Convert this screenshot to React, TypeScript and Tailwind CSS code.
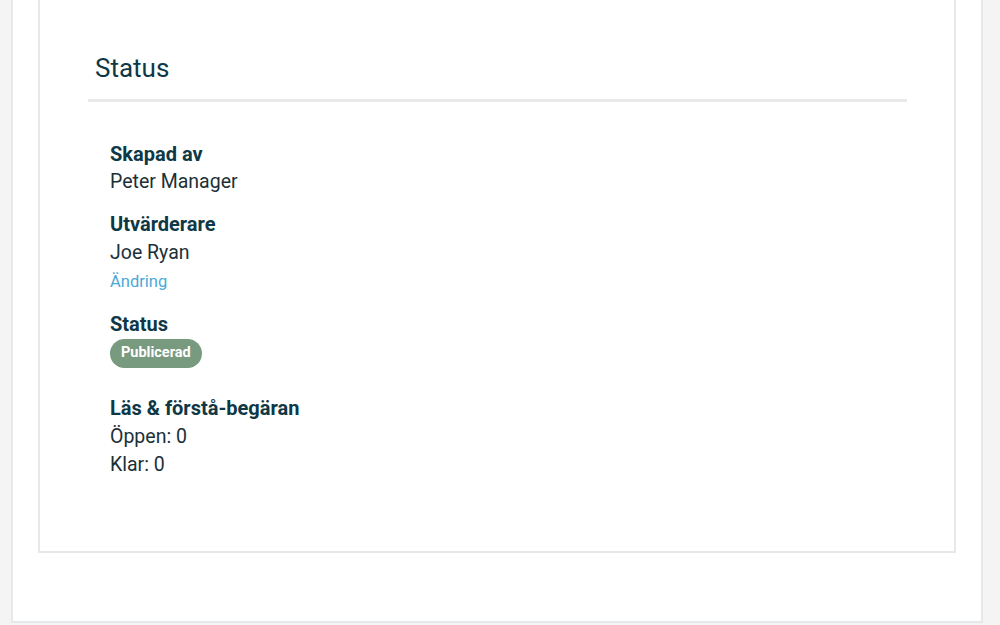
import React from 'react';

const Field: React.FC<{ label: string; children: React.ReactNode; className?: string }> = ({ label, children, className }) => (
    <div className={className}>
        <div className="text-[20px] leading-[28px] font-bold text-[#0e3846]">{label}</div>
        {children}
    </div>
);

const App: React.FC = () => {
    return (
        <div className="w-[1000px] h-[625px] bg-[#f4f4f4] overflow-hidden" style={{ fontFamily: 'Roboto, "Noto Sans", sans-serif' }}>
            <div className="ml-[11px] w-[972px] h-[623px] bg-white border-2 border-t-0 border-[#e6e9ec] pl-[25px]">
                <div className="w-[918px] h-[553px] border-2 border-t-0 border-[#e6e9ec] pl-[48px] pr-[47px] pt-[52px]">
                    {/* Section header */}
                    <div className="border-b-[3px] border-[#e8e9eb] pb-[15px] pl-[7px]">
                        <h2 className="text-[26px] leading-[32px] font-normal text-[#0e3846]">Status</h2>
                    </div>

                    <div className="pl-[22px] pt-[38px] text-[19.5px] leading-[28px] text-[#1b3038]">
                        <Field label="Skapad av">
                            <div>Peter Manager</div>
                        </Field>
                        <Field label="Utvärderare" className="mt-[14px]">
                            <div className="pt-[1px]">Joe Ryan</div>
                            <a className="block text-[16.5px] leading-[30px] text-[#4aa8d8]">Ändring</a>
                        </Field>
                        <Field label="Status" className="mt-[13px]">
                            <div className="flex mt-[1px]">
                                <span className="inline-flex items-center h-[29px] px-[11px] rounded-full bg-[#789a7f] text-white text-[14.5px] font-bold leading-none">
                                    Publicerad
                                </span>
                            </div>
                        </Field>
                        <Field label="Läs & förstå-begäran" className="mt-[26px]">
                            <div className="pt-[1px]">Öppen: 0</div>
                            <div>Klar: 0</div>
                        </Field>
                    </div>
                </div>
            </div>
        </div>
    );
};

export default App;
